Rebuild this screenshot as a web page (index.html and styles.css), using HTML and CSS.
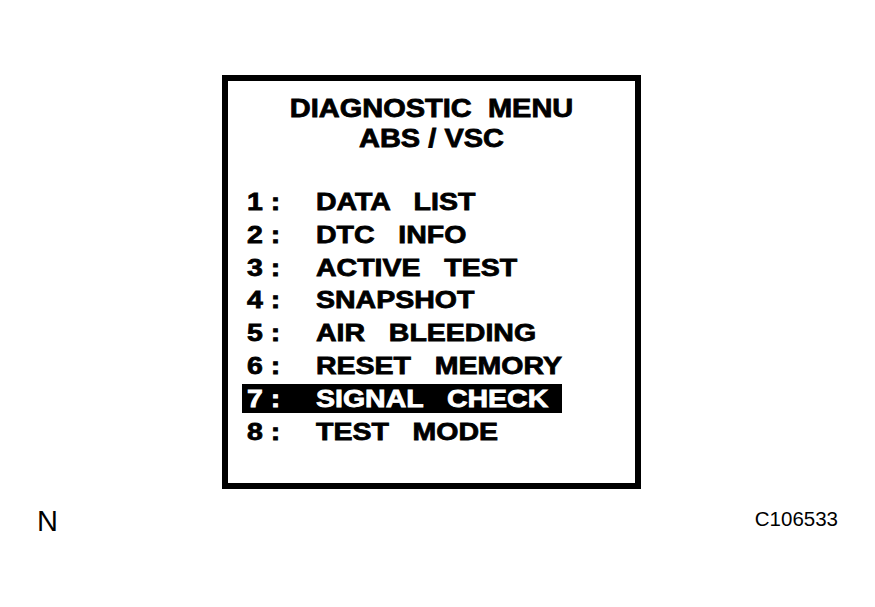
FILE: index.html
```html
<!DOCTYPE html>
<html lang="en">
<head>
<meta charset="utf-8">
<title>Diagnostic Menu ABS / VSC</title>
<link rel="stylesheet" href="styles.css">
</head>
<body>
<div class="page">
  <div class="screen">
    <div class="title">
      <div class="title-line">DIAGNOSTIC  MENU</div>
      <div class="title-line">ABS / VSC</div>
    </div>
    <div class="menu">
      <div class="row"><span class="num">1 :</span><span class="label">DATA   LIST</span></div>
      <div class="row"><span class="num">2 :</span><span class="label">DTC   INFO</span></div>
      <div class="row"><span class="num">3 :</span><span class="label">ACTIVE   TEST</span></div>
      <div class="row"><span class="num">4 :</span><span class="label">SNAPSHOT</span></div>
      <div class="row"><span class="num">5 :</span><span class="label">AIR   BLEEDING</span></div>
      <div class="row"><span class="num">6 :</span><span class="label">RESET   MEMORY</span></div>
      <div class="row row-selected"><span class="num">7 :</span><span class="label">SIGNAL   CHECK</span></div>
      <div class="row"><span class="num">8 :</span><span class="label">TEST   MODE</span></div>
    </div>
  </div>
  <div class="footer">
    <span class="mark">N</span>
    <span class="code">C106533</span>
  </div>
</div>
</body>
</html>
```

FILE: styles.css
```css
html, body {
  margin: 0;
  padding: 0;
  background: #ffffff;
}

body {
  width: 875px;
  height: 607px;
  overflow: hidden;
  font-family: "Liberation Sans", Arial, sans-serif;
  color: #000000;
}

.page {
  display: flex;
  flex-direction: column;
  padding-top: 75px;
}

.screen {
  margin-left: 222px;
  width: 407px;
  height: 402px;
  border: 6px solid #000000;
  display: flex;
  flex-direction: column;
}

.title {
  padding-top: 12px;
  display: flex;
  flex-direction: column;
  align-items: center;
}

.title-line {
  font-weight: bold;
  font-size: 29px;
  line-height: 30px;
  white-space: pre;
  transform: scaleY(0.87);
  -webkit-text-stroke: 0.9px #000000;
}

.menu {
  margin-top: 34px;
  padding-left: 14px;
  display: flex;
  flex-direction: column;
  gap: 3.8px;
}

.row {
  box-sizing: border-box;
  display: flex;
  align-items: center;
  width: fit-content;
  min-width: 320px;
  height: 29px;
  padding-left: 5px;
  padding-right: 12px;
  font-weight: bold;
  font-size: 28.5px;
  white-space: pre;
  -webkit-text-stroke: 0.9px currentColor;
}

.num {
  width: 69px;
  display: inline-block;
  transform: scaleY(0.87);
}

.label {
  display: inline-block;
  transform: scaleY(0.87);
}

.row-selected {
  background: #000000;
  color: #ffffff;
}

.footer {
  display: flex;
  justify-content: space-between;
  align-items: flex-start;
  margin-top: 18px;
  padding: 0 37px;
}

.mark {
  font-size: 29px;
  line-height: 29px;
}

.code {
  font-size: 20.5px;
  line-height: 20px;
  margin-top: 1.5px;
}
```
